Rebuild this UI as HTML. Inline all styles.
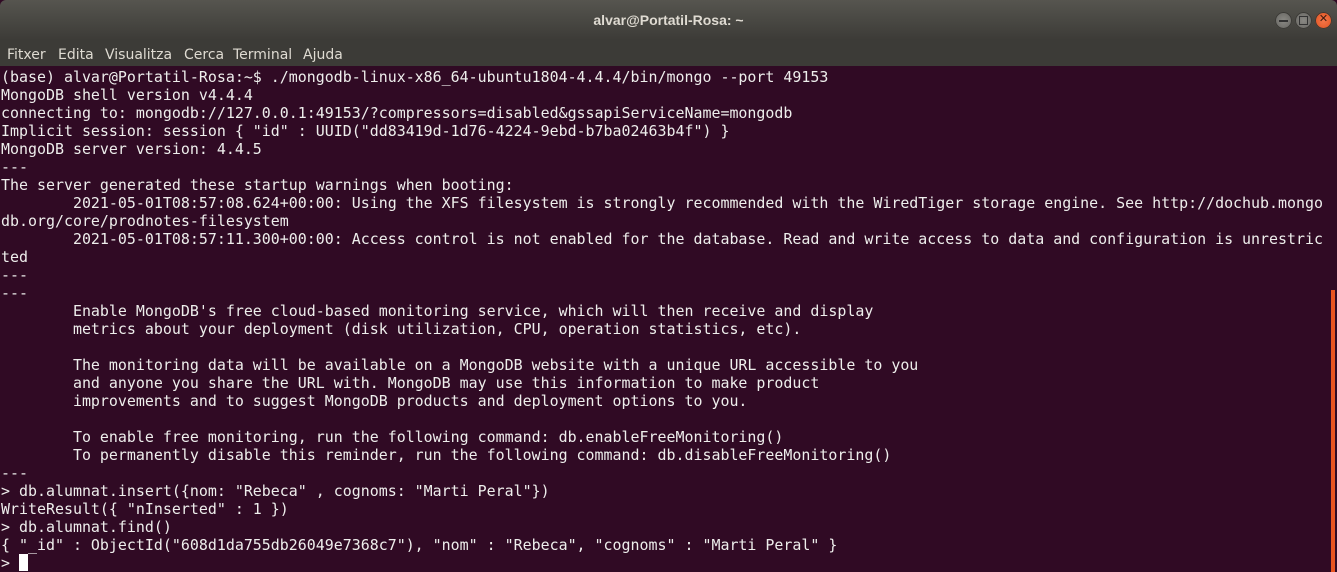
<!DOCTYPE html>
<html><head><meta charset="utf-8"><style>
html,body{margin:0;padding:0;width:1337px;height:572px;overflow:hidden;background:#300a24}
.title{position:absolute;left:0;top:0;width:1337px;height:40px;background:linear-gradient(#56554f,#3c3b37);border-radius:6px 6px 0 0;color:#dfdbd2;font:bold 14px "Liberation Sans",sans-serif;text-align:center;line-height:40px}
.menu{position:absolute;left:0;top:40px;width:1337px;height:26px;background:#3c3b37;color:#dfdbd2;font:14px "DejaVu Sans","Liberation Sans",sans-serif;line-height:30px}
.menu span{position:absolute;top:0}
.btn{position:absolute;top:12px;width:17px;height:17px;border-radius:50%;background:radial-gradient(#8a8984,#63625e);box-shadow:inset 0 0 0 1px #3a3935}
.term{position:absolute;left:1px;top:68px;color:#eeeeec;font:14.94px "DejaVu Sans Mono","Liberation Mono",monospace;line-height:18px;white-space:pre;margin:0}
.cur{display:inline-block;width:9px;height:17px;background:#fff;vertical-align:-3px}
.sb{position:absolute;left:1331px;top:290px;width:4px;height:282px;background:#e95420}
</style></head><body>
<div class="title">alvar@Portatil-Rosa: ~</div>
<div class="btn" style="left:1275px"><div style="position:absolute;left:4px;top:8px;width:9px;height:1.5px;background:#333"></div></div>
<div class="btn" style="left:1295px"><div style="position:absolute;left:4px;top:4px;width:7px;height:7px;border:1.5px solid #333"></div></div>
<div class="btn" style="left:1315px;background:radial-gradient(#f5774a,#e0501c)"><div style="position:absolute;left:0;top:0;width:17px;height:17px;text-align:center;line-height:17px;font:bold 11px 'DejaVu Sans';color:#3a1a10">✕</div></div>
<div class="menu"><span style="left:7px">Fitxer</span><span style="left:58px">Edita</span><span style="left:105px">Visualitza</span><span style="left:184px">Cerca</span><span style="left:233px">Terminal</span><span style="left:303px">Ajuda</span></div>
<pre class="term">(base) alvar@Portatil-Rosa:~$ ./mongodb-linux-x86_64-ubuntu1804-4.4.4/bin/mongo --port 49153
MongoDB shell version v4.4.4
connecting to: mongodb://127.0.0.1:49153/?compressors=disabled&amp;gssapiServiceName=mongodb
Implicit session: session { "id" : UUID("dd83419d-1d76-4224-9ebd-b7ba02463b4f") }
MongoDB server version: 4.4.5
---
The server generated these startup warnings when booting:
        2021-05-01T08:57:08.624+00:00: Using the XFS filesystem is strongly recommended with the WiredTiger storage engine. See http://dochub.mongo
db.org/core/prodnotes-filesystem
        2021-05-01T08:57:11.300+00:00: Access control is not enabled for the database. Read and write access to data and configuration is unrestric
ted
---
---
        Enable MongoDB's free cloud-based monitoring service, which will then receive and display
        metrics about your deployment (disk utilization, CPU, operation statistics, etc).

        The monitoring data will be available on a MongoDB website with a unique URL accessible to you
        and anyone you share the URL with. MongoDB may use this information to make product
        improvements and to suggest MongoDB products and deployment options to you.

        To enable free monitoring, run the following command: db.enableFreeMonitoring()
        To permanently disable this reminder, run the following command: db.disableFreeMonitoring()
---
&gt; db.alumnat.insert({nom: "Rebeca" , cognoms: "Marti Peral"})
WriteResult({ "nInserted" : 1 })
&gt; db.alumnat.find()
{ "_id" : ObjectId("608d1da755db26049e7368c7"), "nom" : "Rebeca", "cognoms" : "Marti Peral" }
&gt; <span class="cur"></span></pre>
<div class="sb"></div>
</body></html>
